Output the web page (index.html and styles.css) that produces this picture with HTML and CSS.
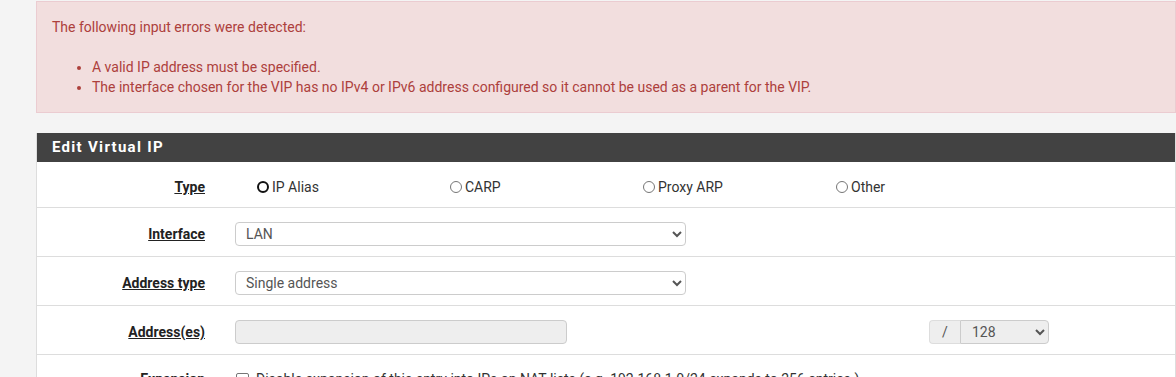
FILE: index.html
```html
<!DOCTYPE html>
<html lang="en">
<head>
    <meta charset="UTF-8">
    <title>Edit Virtual IP</title>
    <link rel="stylesheet" href="styles.css">
</head>
<body>
    <div class="container">
        <div class="alert alert-danger">
            <p>The following input errors were detected:</p>
            <ul>
                <li>A valid IP address must be specified.</li>
                <li>The interface chosen for the VIP has no IPv4 or IPv6 address configured so it cannot be used as a parent for the VIP.</li>
            </ul>
        </div>

        <form class="panel">
            <div class="panel-heading">Edit Virtual IP</div>

            <div class="form-group first">
                <span class="form-label">Type</span>
                <div class="form-field radios">
                    <label class="radio"><input type="radio" name="mode" class="radio-focus" checked> IP Alias</label>
                    <label class="radio"><input type="radio" name="mode"> CARP</label>
                    <label class="radio"><input type="radio" name="mode"> Proxy ARP</label>
                    <label class="radio"><input type="radio" name="mode"> Other</label>
                </div>
            </div>

            <div class="form-group">
                <span class="form-label">Interface</span>
                <div class="form-field">
                    <select class="form-control wide">
                        <option>LAN</option>
                    </select>
                </div>
            </div>

            <div class="form-group">
                <span class="form-label">Address type</span>
                <div class="form-field">
                    <select class="form-control wide">
                        <option>Single address</option>
                    </select>
                </div>
            </div>

            <div class="form-group">
                <span class="form-label">Address(es)</span>
                <div class="form-field address">
                    <input type="text" class="form-control addr-input" disabled>
                    <div class="input-group">
                        <span class="addon">/</span>
                        <select class="form-control mask">
                            <option>128</option>
                        </select>
                    </div>
                </div>
            </div>

            <div class="form-group">
                <span class="form-label">Expansion</span>
                <div class="form-field">
                    <label class="checkbox"><input type="checkbox"> Disable expansion of this entry into IPs on NAT lists (e.g. 192.168.1.0/24 expands to 256 entries.)</label>
                </div>
            </div>
        </form>
    </div>
</body>
</html>
```

FILE: styles.css
```css
body {
    margin: 0;
    font-family: Roboto, "Liberation Sans", sans-serif;
    font-size: 14px;
    line-height: 20px;
    color: #212121;
    background-color: #f4f4f4;
}

.container {
    padding-left: 36px;
    width: 1140px;
}

.alert {
    margin-top: 1px;
    padding: 15px;
    background: #f2dede;
    border: 1px solid #ebccd1;
    color: #ad403c;
}

.alert p {
    margin: 0;
}

.alert ul {
    margin: 20px 0 0;
    padding-left: 40px;
}

.panel {
    margin-top: 20px;
    background: #fff;
    border: 1px solid #ddd;
    border-top: none;
}

.panel-heading {
    background: #424242;
    color: #fff;
    font-size: 15px;
    font-weight: bold;
    letter-spacing: 1.3px;
    line-height: 29px;
    padding: 0 15px;
}

.form-group {
    display: grid;
    grid-template-columns: 183px 1fr;
    align-items: center;
    padding: 14px 0 10px;
    border-bottom: 1px solid #ddd;
}

.form-group.first {
    padding-top: 15px;
}

.form-label {
    text-align: right;
    padding-right: 15px;
    font-weight: bold;
    text-decoration: underline;
    color: #222;
}

.form-field {
    padding-left: 15px;
    display: flex;
    align-items: center;
}

.radios .radio {
    width: 193px;
    padding-left: 22px;
    box-sizing: border-box;
    display: flex;
    align-items: center;
    color: #333;
}

.radio input {
    appearance: none;
    width: 12px;
    height: 12px;
    margin: 0 3px 0 0;
    border: 1px solid #767676;
    border-radius: 50%;
    box-sizing: border-box;
    background: #fff;
}

.radio input.radio-focus {
    border: 2.5px solid #111;
}

.form-control {
    height: 24px;
    box-sizing: border-box;
    border: 1px solid #ccc;
    border-radius: 4px;
    font-family: inherit;
    font-size: 14px;
    color: #555;
    background-color: #fff;
    padding: 0 6px;
}

.wide {
    width: 451px;
}

.addr-input {
    width: 332px;
    background: #eee;
}

.address {
    justify-content: space-between;
    padding-right: 126px;
}

.input-group {
    display: flex;
}

.addon {
    width: 31px;
    height: 24px;
    box-sizing: border-box;
    text-align: center;
    line-height: 22px;
    background: #eee;
    border: 1px solid #ddd;
    border-right: none;
    border-radius: 4px 0 0 4px;
    color: #555;
}

.mask {
    width: 89px;
    background: #eee;
    border-radius: 0 4px 4px 0;
    padding-left: 7px;
}

.checkbox {
    display: flex;
    align-items: center;
    color: #333;
}

.checkbox input {
    appearance: none;
    width: 13px;
    height: 13px;
    margin: 0 7px 0 1px;
    border: 1px solid #767676;
    border-radius: 2px;
    background: #fff;
}
```
